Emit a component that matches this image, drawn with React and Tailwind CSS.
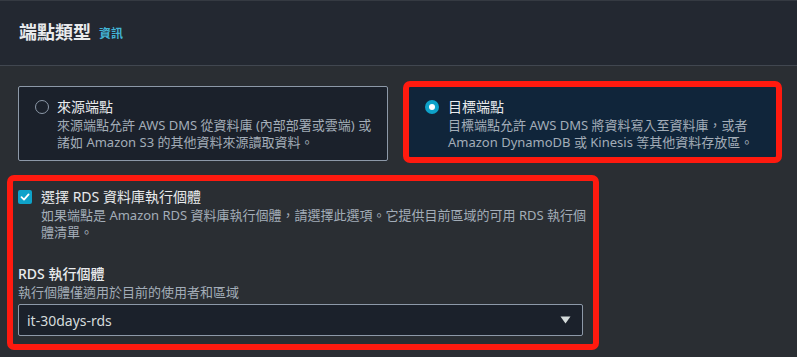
export default function App() {
  return (
    <div className="w-[797px] h-[357px] overflow-hidden bg-[#2a2e33] font-['Noto_Sans','Noto_Sans_CJK_TC',sans-serif] text-[#e9ebed]">
      <header className="h-[66px] bg-[#232831] border-t border-[#353a42] border-b border-b-[#414750] flex items-center px-[19px] pb-[2px]">
        <h1 className="text-[18px] font-bold leading-none text-[#e9ebed]">端點類型</h1>
        <span className="ml-[8px] mt-[3px] text-[12px] font-bold text-[#42b4d6]">資訊</span>
      </header>

      <div className="flex items-start pl-[18px] pt-[15px]">
        <div className="mt-[5px] w-[370px] h-[75px] border border-[#8d99a8] bg-[#1b212b] rounded-[2px] flex pl-[16px] pt-[10px]">
          <span className="mt-[3px] w-[14px] h-[14px] shrink-0 rounded-full border-[1.5px] border-[#8d99a8]" />
          <div className="ml-[8px]">
            <div className="text-[14px] leading-[20px] text-[#e9ebed]">來源端點</div>
            <div className="text-[13px] leading-[17px] text-[#a3adb8] whitespace-nowrap">
              來源端點允許 AWS DMS 從資料庫 (內部部署或雲端) 或
              <br />
              諸如 Amazon S3 的其他資料來源讀取資料。
            </div>
          </div>
        </div>

        <div className="ml-[15px] w-[379px] h-[82px] border-[6px] border-[#ff1a0f] rounded-[7px] bg-[#10253a] flex pl-[16px] pt-[10px]">
          <span className="mt-[3px] w-[14px] h-[14px] shrink-0 rounded-full bg-[#0ea2c9] flex items-center justify-center">
            <span className="w-[6px] h-[6px] rounded-full bg-white" />
          </span>
          <div className="ml-[9px]">
            <div className="text-[14px] leading-[20px] text-[#e9ebed]">目標端點</div>
            <div className="text-[13px] leading-[17px] text-[#a3adb8] whitespace-nowrap">
              目標端點允許 AWS DMS 將資料寫入至資料庫，或者
              <br />
              Amazon DynamoDB 或 Kinesis 等其他資料存放區。
            </div>
          </div>
        </div>
      </div>

      <div className="ml-[7px] mt-[12px] w-[592px] h-[175px] border-[6px] border-[#ff1a0f] rounded-[7px] pl-[5px] pt-[6px]">
        <div className="flex items-start">
          <span className="mt-[3px] w-[14px] h-[14px] shrink-0 rounded-[2px] bg-[#0ea2c9] flex items-center justify-center">
            <svg width="10" height="10" viewBox="0 0 10 10" fill="none">
              <path d="M1.5 5.2 L4 7.6 L8.6 2.4" stroke="white" strokeWidth="1.8" strokeLinecap="round" strokeLinejoin="round" />
            </svg>
          </span>
          <div className="ml-[9px]">
            <div className="text-[14px] leading-[20px] text-[#e9ebed]">選擇 RDS 資料庫執行個體</div>
            <div className="text-[13px] leading-[17px] text-[#a3adb8] whitespace-nowrap">
              如果端點是 Amazon RDS 資料庫執行個體，請選擇此選項。它提供目前區域的可用 RDS 執行個
              <br />
              體清單。
            </div>
          </div>
        </div>

        <div className="mt-[23px] text-[14px] leading-[20px] font-medium text-[#e9ebed]">RDS 執行個體</div>
        <div className="text-[13px] leading-[17px] text-[#a3adb8]">執行個體僅適用於目前的使用者和區域</div>
        <div className="mt-[3px] w-[565px] h-[32px] border border-[#8d99a8] bg-[#1b212b] rounded-[2px] flex items-center justify-between pl-[8px] pr-[11px]">
          <span className="text-[14px] text-[#d5dbdb]">it-30days-rds</span>
          <svg width="11" height="8" viewBox="0 0 11 8">
            <path d="M0.5 0.5 H10.5 L5.5 7.5 Z" fill="#d5dbdb" />
          </svg>
        </div>
      </div>
    </div>
  );
}
